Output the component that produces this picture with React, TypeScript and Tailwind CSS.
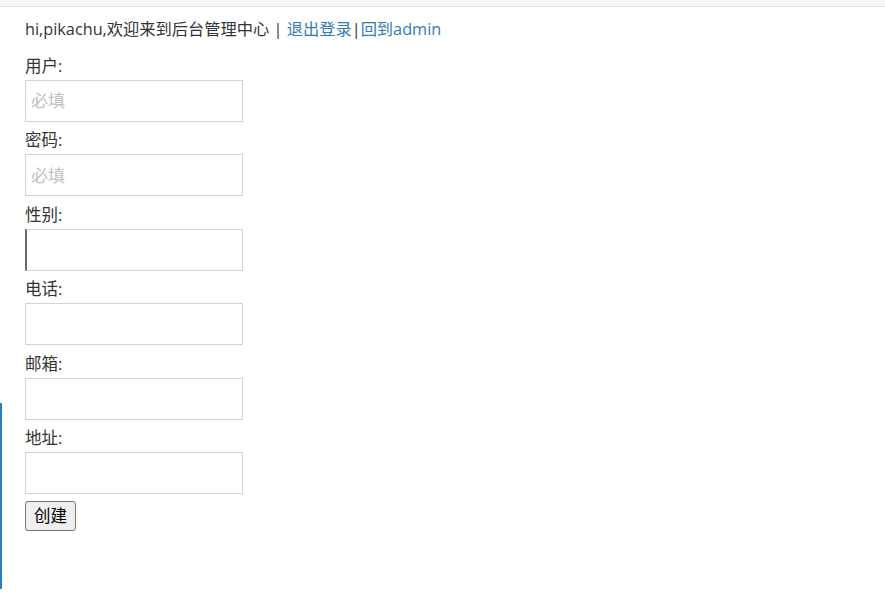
import React from "react";

const fields = [
  { label: "用户:", placeholder: "必填" },
  { label: "密码:", placeholder: "必填" },
  { label: "性别:", placeholder: "", focus: true },
  { label: "电话:", placeholder: "" },
  { label: "邮箱:", placeholder: "" },
  { label: "地址:", placeholder: "" },
];

export default function App() {
  return (
    <div
      className="relative w-[885px] h-[607px] bg-white text-[16.25px] text-[#333]"
      style={{ fontFamily: '"Open Sans", "Noto Sans CJK SC", sans-serif' }}
    >
      <div className="h-[7px] bg-[#f5f5f5] border-b border-[#e3e3e3]" />
      <div className="absolute left-0 top-[403px] w-[2px] h-[186px] bg-[#2a7fc1]" />
      <div className="pl-[25px]">
        <div className="pt-[11px] h-[45px] leading-[22px]">
          hi,pikachu,欢迎来到后台管理中心 | <a className="text-[#337ab7]">退出登录</a>|<a className="text-[#337ab7]">回到admin</a>
        </div>
        {fields.map((f, i) => (
          <div key={i} className="flex flex-col">
            <div className="h-[28px] leading-[22px] pt-[3px] text-[16.5px]">{f.label}</div>
            <div
              className={
                "w-[218px] h-[42px] border border-[#d3d3d3] flex items-center pl-[5px] text-[17px] text-[#c0c0c0] " +
                (f.focus ? "border-l-[#666] border-l-2" : "")
              }
              style={{ marginBottom: i < 5 ? 4.4 : 7 }}
            >
              {f.placeholder}
            </div>
          </div>
        ))}
        <button className="w-[51px] h-[30px] bg-[#efefef] border border-[#767676] rounded-[3px] text-[16.5px] text-black leading-none">
          创建
        </button>
      </div>
    </div>
  );
}
